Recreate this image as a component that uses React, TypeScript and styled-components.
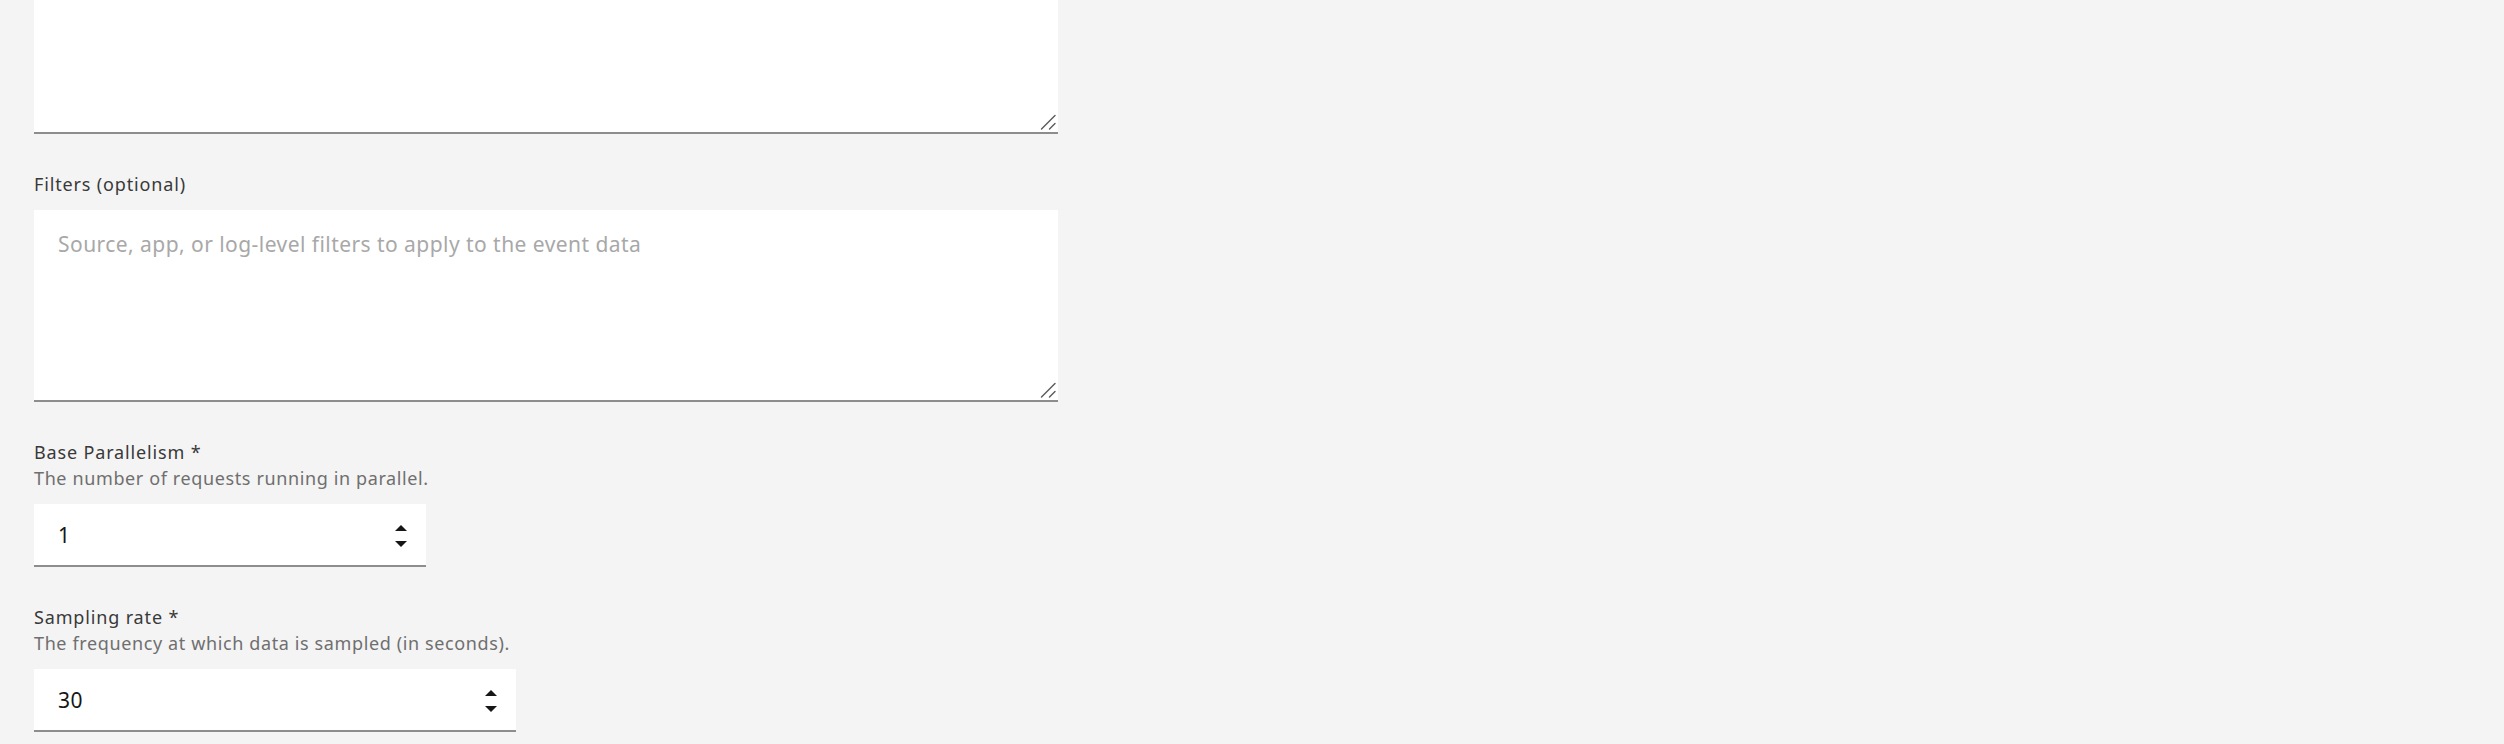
import React from "react";
import styled, { createGlobalStyle } from "styled-components";

const GlobalStyle = createGlobalStyle`
  html, body {
    margin: 0;
    padding: 0;
    background: #f4f4f4;
  }
  * { box-sizing: border-box; }
`;

const FONT = `"Noto Sans", Roboto, "Liberation Sans", sans-serif`;

const Page = styled.div`
  background: #f4f4f4;
  min-height: 744px;
  padding: 0 0 0 34px;
  font-family: ${FONT};
`;

const Form = styled.form`
  display: flex;
  flex-direction: column;
  gap: 38px;
  width: 1024px;
`;

const FormItem = styled.div<{ $stretch?: boolean }>`
  display: flex;
  flex-direction: column;
  align-items: ${(p) => (p.$stretch ? "stretch" : "flex-start")};
`;

const Label = styled.label<{ $hasHelper?: boolean }>`
  font-family: ${FONT};
  font-size: 18px;
  line-height: 24px;
  letter-spacing: 0.85px;
  color: #393939;
  margin-bottom: ${(p) => (p.$hasHelper ? "2px" : "14px")};
`;

const Helper = styled.div`
  font-family: ${FONT};
  font-size: 18px;
  line-height: 24px;
  letter-spacing: 0.62px;
  color: #6f6f6f;
  margin-bottom: 14px;
`;

const TextAreaWrap = styled.div`
  position: relative;
  width: 100%;
`;

const TextArea = styled.textarea<{ $height: number }>`
  display: block;
  width: 100%;
  height: ${(p) => p.$height}px;
  margin: 0;
  padding: 19px 24px 16px;
  border: none;
  border-bottom: 2px solid #8d8d8d;
  border-radius: 0;
  background: #ffffff;
  color: #161616;
  font-family: ${FONT};
  font-size: 21px;
  line-height: 30px;
  letter-spacing: 0.45px;
  resize: vertical;
  outline: none;

  &::placeholder {
    color: #a8a8a8;
    opacity: 1;
  }

  &::-webkit-resizer {
    background: transparent;
  }
`;

const Grip = styled.svg`
  position: absolute;
  right: 2px;
  bottom: 4px;
  width: 16px;
  height: 16px;
  pointer-events: none;
`;

const ResizeGrip = () => (
  <Grip viewBox="0 0 16 16" aria-hidden="true">
    <path d="M15 1.5L1.5 15" stroke="#5a5a5a" strokeWidth="1.4" strokeLinecap="round" />
    <path d="M15 9.5L9.5 15" stroke="#5a5a5a" strokeWidth="1.4" strokeLinecap="round" />
  </Grip>
);

const NumberField = styled.div<{ $width: number }>`
  display: flex;
  align-items: stretch;
  width: ${(p) => p.$width}px;
  height: 63px;
  background: #ffffff;
  border-bottom: 2px solid #8d8d8d;
`;

const NumberInput = styled.input`
  flex: 1;
  min-width: 0;
  margin: 0;
  padding: 0 0 0 24px;
  border: none;
  background: transparent;
  color: #161616;
  font-family: ${FONT};
  font-size: 21px;
  letter-spacing: 0.45px;
  outline: none;
  -moz-appearance: textfield;

  &::-webkit-inner-spin-button,
  &::-webkit-outer-spin-button {
    -webkit-appearance: none;
    margin: 0;
  }
`;

const Controls = styled.div`
  width: 50px;
  display: flex;
  flex-direction: column;
  align-items: center;
  justify-content: center;
  gap: 10px;
  padding-top: 3px;
`;

const StepButton = styled.button`
  display: flex;
  align-items: center;
  justify-content: center;
  width: 24px;
  height: 6px;
  padding: 0;
  margin: 0;
  border: none;
  background: transparent;
  cursor: pointer;
  color: #161616;
`;

const Caret = ({ up }: { up?: boolean }) => (
  <svg width="12" height="6" viewBox="0 0 8 4" aria-hidden="true">
    <path d={up ? "M0 4L4 0 8 4z" : "M8 0L4 4 0 0z"} fill="currentColor" />
  </svg>
);

const NumberBox = ({ value, width }: { value: number; width: number }) => (
  <NumberField $width={width}>
    <NumberInput type="number" defaultValue={value} />
    <Controls>
      <StepButton type="button" aria-label="Increment number">
        <Caret up />
      </StepButton>
      <StepButton type="button" aria-label="Decrement number">
        <Caret />
      </StepButton>
    </Controls>
  </NumberField>
);

export default function App() {
  return (
    <>
      <GlobalStyle />
      <Page>
        <Form onSubmit={(e) => e.preventDefault()}>
          <FormItem $stretch>
            <TextAreaWrap>
              <TextArea $height={134} />
              <ResizeGrip />
            </TextAreaWrap>
          </FormItem>

          <FormItem $stretch>
            <Label>Filters (optional)</Label>
            <TextAreaWrap>
              <TextArea
                $height={192}
                placeholder="Source, app, or log-level filters to apply to the event data"
              />
              <ResizeGrip />
            </TextAreaWrap>
          </FormItem>

          <FormItem>
            <Label $hasHelper>Base Parallelism *</Label>
            <Helper>The number of requests running in parallel.</Helper>
            <NumberBox value={1} width={392} />
          </FormItem>

          <FormItem>
            <Label $hasHelper>Sampling rate *</Label>
            <Helper>The frequency at which data is sampled (in seconds).</Helper>
            <NumberBox value={30} width={482} />
          </FormItem>
        </Form>
      </Page>
    </>
  );
}
